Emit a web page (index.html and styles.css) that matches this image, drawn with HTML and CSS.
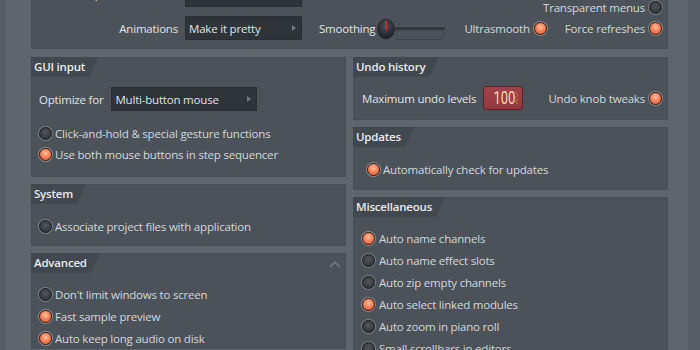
FILE: index.html
```html
<!DOCTYPE html>
<html>
<head>
<meta charset="utf-8">
<link rel="stylesheet" href="styles.css">
</head>
<body>
<div class="content">
  <section class="panel top">
    <div class="top-row first">
      <span class="label wide">Transparent windows</span>
      <div class="dropdown w117"><span>Off</span><i class="arrow"></i></div>
      <div class="toggle right end"><span>Transparent menus</span><i class="radio"></i></div>
    </div>
    <div class="top-row">
      <span class="label wide">Animations</span>
      <div class="dropdown w117"><span>Make it pretty</span><i class="arrow"></i></div>
      <span class="label smooth">Smoothing</span>
      <svg class="knob" width="70" height="22" viewBox="0 0 70 22">
        <defs>
          <radialGradient id="kg" cx="50%" cy="35%" r="65%">
            <stop offset="0" stop-color="#4a5056"/>
            <stop offset="1" stop-color="#1c1f23"/>
          </radialGradient>
        </defs>
        <line x1="17" y1="10.5" x2="68" y2="10.5" stroke="#2b3035" stroke-width="2"/>
        <rect x="19.5" y="12.5" width="47" height="9" fill="none" stroke="#434950" stroke-width="1"/>
        <line x1="20" y1="21.5" x2="66" y2="21.5" stroke="#3a3f45" stroke-width="1" stroke-dasharray="1 1"/>
        <ellipse cx="9" cy="11" rx="8.6" ry="10" fill="url(#kg)" stroke="#2a2e32" stroke-width="0.8"/>
        <line x1="9" y1="2.5" x2="9" y2="12.5" stroke="#e3262a" stroke-width="1.6"/>
      </svg>
      <div class="toggles">
        <div class="toggle"><span>Ultrasmooth</span><i class="radio on"></i></div>
        <div class="toggle"><span>Force refreshes</span><i class="radio on"></i></div>
      </div>
    </div>
  </section>

  <div class="cols">
    <div class="col">
      <section class="panel gui">
        <header class="head"><span class="tab">GUI input</span></header>
        <div class="body pl8">
          <div class="opt-row">
            <span class="label">Optimize for</span>
            <div class="dropdown w146"><span>Multi-button mouse</span><i class="arrow"></i></div>
          </div>
          <div class="radios">
            <div class="row"><i class="radio"></i><span>Click-and-hold &amp; special gesture functions</span></div>
            <div class="row"><i class="radio on"></i><span>Use both mouse buttons in step sequencer</span></div>
          </div>
        </div>
      </section>

      <section class="panel sys">
        <header class="head"><span class="tab">System</span></header>
        <div class="body pl8">
          <div class="row"><i class="radio"></i><span>Associate project files with application</span></div>
        </div>
      </section>

      <section class="panel adv">
        <header class="head"><span class="tab">Advanced</span>
          <svg class="chev" width="12" height="7" viewBox="0 0 12 7"><polyline points="1,6 6,1 11,6" fill="none" stroke="#7b828a" stroke-width="1.2"/></svg>
        </header>
        <div class="body pl8">
          <div class="row"><i class="radio"></i><span>Don't limit windows to screen</span></div>
          <div class="row"><i class="radio on"></i><span>Fast sample preview</span></div>
          <div class="row"><i class="radio on"></i><span>Auto keep long audio on disk</span></div>
        </div>
      </section>
    </div>

    <div class="col">
      <section class="panel undo">
        <header class="head"><span class="tab">Undo history</span></header>
        <div class="body undo-row">
          <span class="label">Maximum undo levels</span>
          <div class="numbox"><span class="num">100</span>
            <svg class="spin" width="5" height="14" viewBox="0 0 5 14"><polyline points="1,1 4,4 1,7" fill="none" stroke="#c87c84" stroke-width="0.9"/><polyline points="4,8 1,10.5 4,13" fill="none" stroke="#c87c84" stroke-width="0.9"/></svg>
          </div>
          <div class="toggle end"><span>Undo knob tweaks</span><i class="radio on"></i></div>
        </div>
      </section>

      <section class="panel upd">
        <header class="head"><span class="tab">Updates</span></header>
        <div class="body pl14">
          <div class="row"><i class="radio on"></i><span>Automatically check for updates</span></div>
        </div>
      </section>

      <section class="panel misc">
        <header class="head"><span class="tab">Miscellaneous</span></header>
        <div class="body pl9">
          <div class="row g4"><i class="radio on"></i><span>Auto name channels</span></div>
          <div class="row g4"><i class="radio"></i><span>Auto name effect slots</span></div>
          <div class="row g4"><i class="radio"></i><span>Auto zip empty channels</span></div>
          <div class="row g4"><i class="radio on"></i><span>Auto select linked modules</span></div>
          <div class="row g4"><i class="radio"></i><span>Auto zoom in piano roll</span></div>
          <div class="row g4"><i class="radio"></i><span>Small scrollbars in editors</span></div>
        </div>
      </section>
    </div>
  </div>
</div>
</body>
</html>
```

FILE: styles.css
```css
* { box-sizing: border-box; }
html, body { margin: 0; padding: 0; }
body {
  width: 700px;
  height: 350px;
  overflow: hidden;
  font-family: "Open Sans", "Noto Sans", sans-serif;
  font-size: 11.5px;
  letter-spacing: -0.2px;
  color: #d3d7db;
  background: linear-gradient(to right, #555c63 0, #555c63 6px, #5e656c 6px, #5e656c 688px, #565d64 688px);
}
.content {
  padding-left: 31px;
  width: 668px;
}
.panel {
  background: #4b5259;
  box-shadow: inset 0 0 0 1px #474e55;
}
.top {
  margin-top: -24px;
  padding: 7px 6px 9px 7px;
  display: flex;
  flex-direction: column;
  gap: 9px;
}
.top-row {
  display: flex;
  align-items: center;
  height: 24px;
}
.top-row.first { align-items: flex-start; }
.top-row.first .label { line-height: 22px; }
.label { color: #e1e4e7; white-space: nowrap; }
.label.wide { width: 140px; text-align: right; margin-right: 7px; }
.label.smooth { margin-left: 17px; margin-right: 2px; }
.knob { display: block; margin-top: 1px; }
.dropdown {
  height: 24px;
  background: #2f3439;
  border: 1px solid #2a2e33;
  display: flex;
  align-items: center;
  justify-content: space-between;
  padding: 0 5px 0 3px;
  color: #dfe2e5;
}
.dropdown span { white-space: nowrap; }
.w117 { width: 117px; }
.w146 { width: 146px; }
.arrow {
  width: 0; height: 0;
  border-left: 4px solid #737a81;
  border-top: 3px solid transparent;
  border-bottom: 3px solid transparent;
}
.toggle {
  display: flex;
  align-items: center;
  gap: 4px;
  white-space: nowrap;
}
.toggle.right { margin-left: auto; }
.top-row.first .toggle { align-self: flex-end; margin-bottom: -7px; height: 14px; }
.toggles { margin-left: auto; display: flex; gap: 18px; }
.end { margin-left: auto; }

.radio {
  display: block;
  flex: none;
  width: 13px;
  height: 13px;
  border-radius: 50%;
  background: radial-gradient(circle at 50% 40%, #52575c 0, #3b3f43 55%, #2b2e31 100%);
  border: 1px solid #1e2124;
  box-shadow: 0 0 0 1px #7a8087;
}
.radio.on {
  background: radial-gradient(circle at 50% 38%, #ffc2a0 0, #f5845c 45%, #d9492a 100%);
  border-color: #3a2420;
  box-shadow: 0 0 0 1px #8e8a88;
}

.cols {
  margin-top: 8px;
  display: grid;
  grid-template-columns: 315px 315px;
  gap: 7px;
}
.col { display: flex; flex-direction: column; gap: 7px; }
.head {
  height: 20px;
  display: flex;
  align-items: center;
  justify-content: space-between;
}
.tab {
  height: 20px;
  line-height: 19px;
  padding: 0 13px 0 3px;
  background: #42484f;
  color: #e8eaec;
  font-weight: 600;
  font-size: 11.5px;
  clip-path: polygon(0 0, 100% 0, calc(100% - 9px) 100%, 0 100%);
}
.chev { margin-right: 5px; margin-top: 2px; }
.pl8 { padding-left: 8px; }
.pl9 { padding-left: 9px; }
.pl14 { padding-left: 14px; }
.row {
  height: 22px;
  display: flex;
  align-items: center;
  gap: 3px;
  white-space: nowrap;
}
.row.g4 { gap: 4px; }
.gui .body { padding-top: 10px; padding-bottom: 10px; }
.opt-row { display: flex; align-items: center; gap: 8px; height: 24px; margin-bottom: 11px; }
.radios .row:last-child { height: 21px; }
.radios { padding-bottom: 2px; }
.sys .body { padding-top: 11px; padding-bottom: 9px; }
.adv .body { padding-top: 10px; }
.upd .body { padding-top: 11px; padding-bottom: 10px; }
.misc .body { padding-top: 10px; }
.undo-row {
  display: flex;
  align-items: center;
  height: 24px;
  margin: 9px 0 10px;
  padding: 0 6px 0 9px;
}
.numbox {
  margin-left: 7px;
  width: 40px;
  height: 24px;
  border-radius: 3px;
  background: linear-gradient(#a4414b, #93373f);
  border: 1px solid #5c2228;
  display: flex;
  align-items: center;
  justify-content: flex-end;
  padding-right: 3px;
  gap: 1px;
}
.num {
  display: inline-block;
  font-family: "Roboto", "Liberation Sans", sans-serif;
  font-size: 18px;
  line-height: 18px;
  letter-spacing: 0;
  color: #f6dca6;
  transform: scaleX(0.72);
  transform-origin: right center;
  margin-right: -2px;
}
.spin { display: block; }
```
